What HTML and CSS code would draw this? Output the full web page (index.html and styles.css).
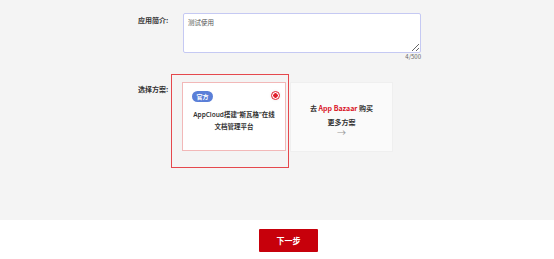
FILE: index.html
```html
<!DOCTYPE html>
<html lang="zh-CN">
<head>
  <meta charset="UTF-8" />
  <meta name="viewport" content="width=device-width, initial-scale=1.0" />
  <title>创建应用</title>
  <link rel="stylesheet" href="styles.css">
</head>
<body>
  <div class="main">
    <div class="form-row">
      <div class="label">应用简介:</div>
      <div class="field">
        <textarea class="intro">测试使用</textarea>
        <div class="counter">4/500</div>
      </div>
    </div>

    <div class="form-row plan-row">
      <div class="label">选择方案:</div>
      <div class="options">
        <div class="card selected">
          <span class="badge">官方</span>
          <span class="radio"></span>
          <p class="card-title">AppCloud搭建“斯瓦格”在线<br>文档管理平台</p>
          <div class="highlight"></div>
        </div>
        <div class="card more">
          <p class="more-line">去 <span class="brand">App Bazaar</span> 购买</p>
          <p class="more-line">更多方案</p>
          <p class="arrow">→</p>
        </div>
      </div>
    </div>
  </div>

  <div class="footer">
    <button class="next">下一步</button>
  </div>
</body>
</html>
```

FILE: styles.css
```css
body {
  font-family: "Noto Sans CJK SC", "Noto Sans", sans-serif;
  background-color: #f4f4f4;
  color: #333333;
  margin: 0;
  padding: 0;
}
.main {
  height: 220px;
  box-sizing: border-box;
  padding: 13px 0 0 138px;
}
.form-row {
  display: flex;
}
.label {
  width: 44px;
  padding-top: 2px;
  font-size: 7px;
  font-weight: bold;
  color: #333333;
  line-height: 10px;
}
.field {
  width: 238px;
  margin-left: 1px;
}
.intro {
  display: block;
  width: 238px;
  height: 40px;
  box-sizing: border-box;
  border: 1px solid #c5c9f3;
  border-radius: 2px;
  padding: 3px 4px;
  font-family: inherit;
  font-size: 6.5px;
  color: #555555;
  outline: none;
}
.counter {
  text-align: right;
  font-size: 6px;
  line-height: 8px;
  color: #666666;
}
.plan-row {
  margin-top: 21px;
}
.options {
  display: flex;
  gap: 4px;
}
.card {
  position: relative;
  width: 104px;
  height: 69px;
  box-sizing: border-box;
  background: #ffffff;
  text-align: center;
}
.selected {
  border: 1px solid #f2b8b8;
  padding-top: 8px;
}
.badge {
  display: block;
  width: 21px;
  height: 11px;
  margin-left: 9px;
  border-radius: 6px;
  background: #5a7fd8;
  color: #ffffff;
  font-size: 6px;
  font-weight: bold;
  line-height: 11px;
}
.radio {
  position: absolute;
  top: 8px;
  right: 5px;
  width: 9px;
  height: 9px;
  box-sizing: border-box;
  border: 1.5px solid #e0202c;
  border-radius: 50%;
  background: radial-gradient(circle, #e0202c 0 2px, #ffffff 2.5px);
  box-shadow: 0 0 3px rgba(0, 0, 0, 0.08);
}
.card-title {
  margin: 7px 0 0;
  font-family: "Noto Sans", "Noto Sans CJK SC", sans-serif;
  font-size: 6.5px;
  font-weight: 600;
  line-height: 12px;
  color: #333333;
}
.highlight {
  position: absolute;
  top: -9px;
  left: -12px;
  right: -4px;
  bottom: -18px;
  border: 1px solid #e5484d;
}
.more {
  width: 103px;
  height: 70px;
  background: #fafafa;
  border: 1px solid #efefef;
  padding-top: 19px;
}
.more-line {
  margin: 0 0 2px;
  font-size: 7px;
  font-weight: 600;
  line-height: 12px;
  color: #333333;
}
.brand {
  color: #d9121e;
  font-weight: bold;
}
.arrow {
  margin: -2px 0 0;
  font-size: 9px;
  line-height: 10px;
  color: #999999;
}
.footer {
  height: 39px;
  background: #ffffff;
  display: flex;
  justify-content: center;
  padding-left: 23px;
}
.next {
  margin-top: 9px;
  width: 59px;
  height: 23px;
  background-color: #c7000b;
  color: #ffffff;
  border: none;
  border-radius: 1px;
  font-family: inherit;
  font-size: 8px;
  font-weight: bold;
  cursor: pointer;
}
```
